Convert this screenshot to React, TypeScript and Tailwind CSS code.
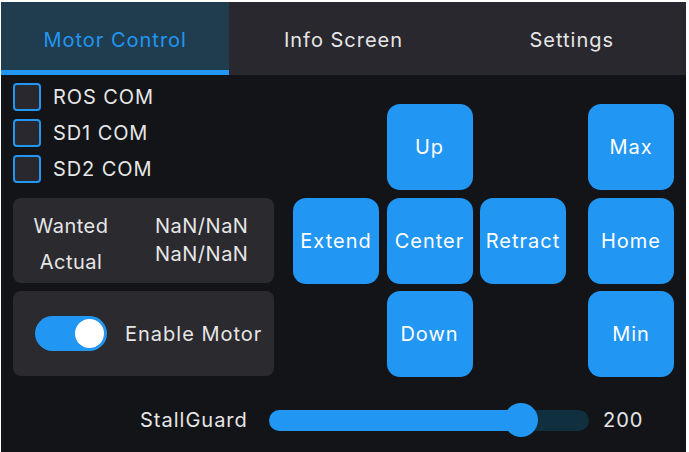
import React, { useState } from "react";

const font = { fontFamily: "Inter, 'Noto Sans', sans-serif" };

function Tab({ label, active }: { label: string; active?: boolean }) {
  return (
    <div
      className={`flex-1 flex items-center justify-center pt-[8px] text-[20px] tracking-[1px] ${
        active
          ? "bg-[#203d4f] text-[#2196f3] border-b-[5px] border-[#2196f3]"
          : "bg-[#29282f] text-[#e6e6e6] border-b-[5px] border-transparent"
      }`}
    >
      {label}
    </div>
  );
}

function Check({ label }: { label: string }) {
  return (
    <div className="h-[36px] flex items-center gap-[12px]">
      <div className="w-[28px] h-[28px] rounded-[4px] border-2 border-[#2196f3] bg-[#29282f]" />
      <span className="text-[20px] tracking-[0.9px] text-[#e6e6e6]">{label}</span>
    </div>
  );
}

function Btn({ label }: { label: string }) {
  return (
    <button className="w-[86px] h-[86px] rounded-[13px] bg-[#2196f3] text-white text-[20px] tracking-[1px] flex items-center justify-center">
      {label}
    </button>
  );
}

export default function App() {
  const [enabled, setEnabled] = useState(true);
  const [stall] = useState(200);

  return (
    <div className="w-[689px] h-[452px] bg-white pt-[2px] pl-px pr-[3px]" style={font}>
      <div className="h-full flex flex-col bg-[#121418]">
        <div className="h-[73px] flex">
          <Tab label="Motor Control" active />
          <Tab label="Info Screen" />
          <Tab label="Settings" />
        </div>

        <div className="flex items-start">
          {/* left column */}
          <div className="w-[273px] pl-[12px] pt-[4px] flex flex-col">
            <Check label="ROS COM" />
            <Check label="SD1 COM" />
            <Check label="SD2 COM" />

            <div className="mt-[11px] h-[85px] rounded-[8px] bg-[#2a2a2f] flex text-[20px] tracking-[0.5px] text-[#e6e6e6] pt-[16px]">
              <div className="w-[84px] ml-[16px] flex flex-col items-center gap-[12px] leading-[24px]">
                <span>Wanted</span>
                <span>Actual</span>
              </div>
              <div className="ml-[42px] flex flex-col gap-[4px] leading-[24px]">
                <span>NaN/NaN</span>
                <span>NaN/NaN</span>
              </div>
            </div>

            <div className="mt-[8px] h-[85px] rounded-[8px] bg-[#2a2a2f] flex items-center pl-[22px] gap-[18px]">
              <button
                onClick={() => setEnabled(!enabled)}
                className={`w-[72px] h-[35px] rounded-full p-[3px] flex ${
                  enabled ? "bg-[#2196f3] justify-end" : "bg-[#3a3a40] justify-start"
                }`}
              >
                <span className="w-[29px] h-[29px] rounded-full bg-white" />
              </button>
              <span className="text-[20px] tracking-[1px] text-[#e6e6e6]">Enable Motor</span>
            </div>
          </div>

          {/* d-pad */}
          <div className="ml-[19px] mt-[29px] grid grid-cols-[86px_86px_86px] gap-x-[7.5px] gap-y-[7.5px]">
            <div />
            <Btn label="Up" />
            <div />
            <Btn label="Extend" />
            <Btn label="Center" />
            <Btn label="Retract" />
            <div />
            <Btn label="Down" />
            <div />
          </div>

          {/* limits */}
          <div className="ml-[22px] mt-[29px] flex flex-col gap-[7.5px]">
            <Btn label="Max" />
            <Btn label="Home" />
            <Btn label="Min" />
          </div>
        </div>

        {/* stallguard slider */}
        <div className="mt-[26px] h-[34px] flex items-center pl-[139px]">
          <span className="w-[109px] text-[20px] tracking-[1px] text-[#e6e6e6]">StallGuard</span>
          <div className="ml-[20px] relative w-[320px] h-[21px] rounded-full bg-[#11303f]">
            <div className="h-full w-[252px] rounded-full bg-[#2196f3]" />
            <div className="absolute top-[-7px] left-[235px] w-[34px] h-[34px] rounded-full bg-[#2196f3]" />
          </div>
          <span className="ml-[14px] text-[20px] tracking-[1px] text-[#e6e6e6]">{stall}</span>
        </div>
      </div>
    </div>
  );
}
